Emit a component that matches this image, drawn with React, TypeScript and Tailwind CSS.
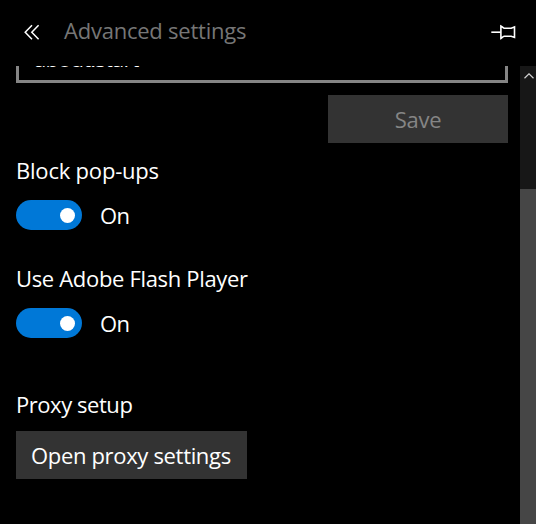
import { useState } from "react";

function BackIcon() {
  return (
    <svg width="16" height="16" viewBox="0 0 16 16" fill="none" stroke="#fff" strokeWidth="1.5">
      <path d="M8 1.2 L1.2 8.2 L8 15.2" />
      <path d="M14.6 1.2 L7.8 8.2 L14.6 15.2" />
    </svg>
  );
}

function PinIcon() {
  return (
    <svg width="25" height="16" viewBox="0 0 25 16" fill="none" stroke="#fff" strokeWidth="1.6">
      <path d="M0.3 8.2 H9.8" />
      <path d="M9.9 2 V14.4 C11 13.9 11.8 12.6 13.2 12.2 H20.2 L23.5 13.4 V3 L20.2 4.2 H13.2 C11.8 3.8 11 2.5 9.9 2 Z" />
    </svg>
  );
}

function Toggle({ className = "" }: { className?: string }) {
  const [on, setOn] = useState(true);

  return (
    <div className={`flex h-[30px] items-center ${className}`}>
      <button
        role="switch"
        aria-checked={on}
        onClick={() => setOn(!on)}
        className={`flex h-[30px] w-[66px] items-center rounded-full px-[7px] ${
          on ? "justify-end bg-[#0078d7]" : "justify-start bg-[#333333]"
        }`}
      >
        <span className="size-[15px] rounded-full bg-white" />
      </button>
      <span className="ml-[18px] tracking-[-0.5px]">{on ? "On" : "Off"}</span>
    </div>
  );
}

export default function App() {
  return (
    <div className="flex h-[524px] w-[536px] flex-col overflow-hidden bg-black font-['Open_Sans','Noto_Sans',sans-serif] text-[22px] leading-[30px] whitespace-nowrap text-white">
      <header className="flex h-[66px] shrink-0 items-start pr-5 pl-6">
        <button aria-label="Back" className="mt-6">
          <BackIcon />
        </button>
        <h1 className="mt-[15px] ml-6 tracking-[-0.23px] text-[#767676]">Advanced settings</h1>
        <button aria-label="Pin this pane" className="mt-6 ml-auto">
          <PinIcon />
        </button>
      </header>

      <div className="flex min-h-0 flex-1">
        <main className="flex-1 overflow-hidden pr-3 pl-4">
          {/* Scrolled so that only the bottom of the address box shows */}
          <div className="-mt-[31px] h-12 border-[3px] border-[#858585] pt-[5px] pl-[15px] tracking-[-0.8px]">
            about:start
          </div>
          <button className="mt-3 ml-auto flex h-12 w-[180px] items-center justify-center bg-[#333333] tracking-[-0.3px] text-[#858585]">
            Save
          </button>

          <h2 className="mt-3 tracking-[-0.2px]">Block pop-ups</h2>
          <Toggle className="mt-[15px]" />

          <h2 className="mt-[33px] tracking-[-0.33px]">Use Adobe Flash Player</h2>
          <Toggle className="mt-[15px]" />

          <h2 className="mt-[51px] tracking-[-0.45px]">Proxy setup</h2>
          <button className="mt-3 flex h-12 w-[231px] items-center bg-[#333333] pl-[15px] tracking-[-0.33px]">
            Open proxy settings
          </button>
        </main>

        <div className="flex w-4 flex-col bg-[#171717]">
          <div className="flex h-[123px] justify-center pt-[7px] pl-0.5">
            <svg width="10" height="6" viewBox="0 0 10 6" fill="none" stroke="#d0d0d0" strokeWidth="1.2">
              <path d="M0.5 5.2 L5 0.8 L9.5 5.2" />
            </svg>
          </div>
          <div className="flex-1 bg-[#464646]" />
        </div>
      </div>
    </div>
  );
}
